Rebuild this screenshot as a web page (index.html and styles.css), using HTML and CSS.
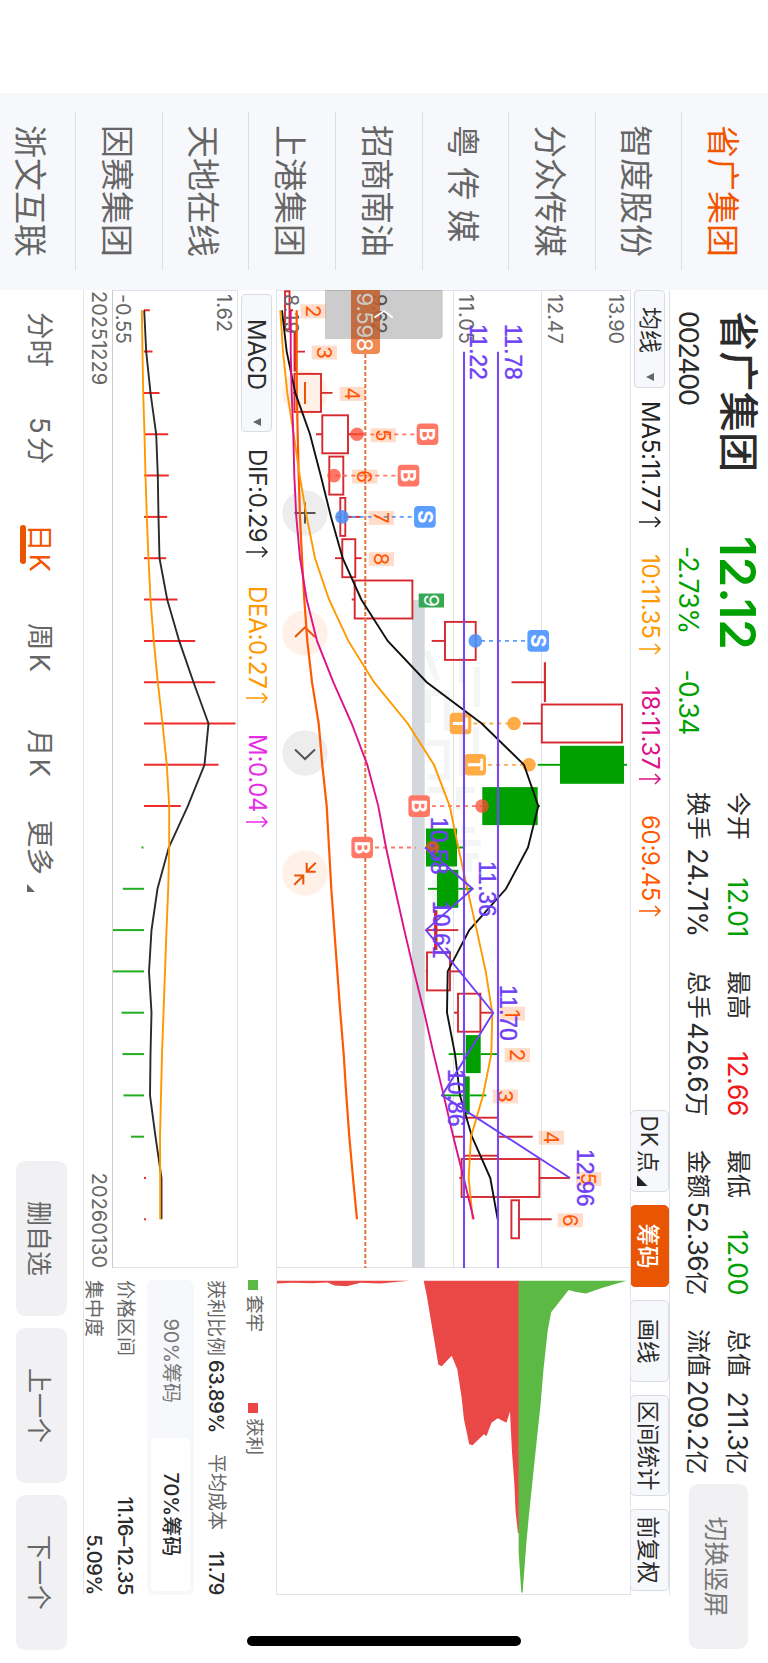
FILE: index.html
```html
<!DOCTYPE html>
<html lang="zh-CN">
<head>
  <meta charset="UTF-8" />
  <meta name="viewport" content="width=device-width, initial-scale=1.0"/>
  <title>省广集团 002400</title>
  <link rel="stylesheet" href="styles.css">
</head>
<body>

  <div class="screen">
    <aside class="watchlist">
      <div class="stock active">省广集团</div>
      <div class="stock">智度股份</div>
      <div class="stock">分众传媒</div>
      <div class="stock">粤 传 媒</div>
      <div class="stock">招商南油</div>
      <div class="stock">上港集团</div>
      <div class="stock">天地在线</div>
      <div class="stock">因赛集团</div>
      <div class="stock">浙文互联</div>
    </aside>

    <main class="main">
      <header class="quote">
        <div class="title">
          <h1>省广集团</h1>
          <div class="code">002400</div>
        </div>
        <div class="price">
          <div class="last">12.12</div>
          <div class="change"><span>-2.73%</span><span>-0.34</span></div>
        </div>
        <div class="stats">
          <div class="stat"><span>今开</span><span class="green">12.01</span></div>
          <div class="stat"><span>最高</span><span class="red">12.66</span></div>
          <div class="stat"><span>最低</span><span class="green">12.00</span></div>
          <div class="stat"><span>总值</span><span>211.3<em>亿</em></span></div>
          <div class="stat"><span>换手</span><span>24.71%</span></div>
          <div class="stat"><span>总手</span><span>426.6<em>万</em></span></div>
          <div class="stat"><span>金额</span><span>52.36<em>亿</em></span></div>
          <div class="stat"><span>流值</span><span>209.2<em>亿</em></span></div>
        </div>
        <button class="gray-btn rotate-btn">切换竖屏</button>
      </header>

      <div class="toolbar">
        <button class="select ma-select">均线<i class="caret"></i></button>
        <span class="ind ma5">MA5:11.77<svg class="up" viewBox="0 0 14 24"><path d="M7 23V2M2 7l5-5 5 5"/></svg></span>
        <span class="ind ma10">10:11.35<svg class="up" viewBox="0 0 14 24"><path d="M7 23V2M2 7l5-5 5 5"/></svg></span>
        <span class="ind ma18">18:11.37<svg class="up" viewBox="0 0 14 24"><path d="M7 23V2M2 7l5-5 5 5"/></svg></span>
        <span class="ind ma60">60:9.45<svg class="up" viewBox="0 0 14 24"><path d="M7 23V2M2 7l5-5 5 5"/></svg></span>
        <div class="tools">
          <button class="tool dk">DK<span>点</span><i class="corner"></i></button>
          <button class="tool active">筹码</button>
          <button class="tool">画线</button>
          <button class="tool wide">区间统计</button>
          <button class="tool">前复权</button>
        </div>
      </div>

      <div class="charts">
        <div class="left">
          <svg id="kline" class="kline" viewBox="0 0 978 355"></svg>

          <div class="macd-bar">
            <button class="select macd-select">MACD<i class="caret"></i></button>
            <span class="ind dif">DIF:0.29<svg class="up" viewBox="0 0 14 24"><path d="M7 23V2M2 7l5-5 5 5"/></svg></span>
            <span class="ind dea">DEA:0.27<svg class="up" viewBox="0 0 14 24"><path d="M7 23V2M2 7l5-5 5 5"/></svg></span>
            <span class="ind macd">M:0.04<svg class="up" viewBox="0 0 14 24"><path d="M7 23V2M2 7l5-5 5 5"/></svg></span>
          </div>

          <svg id="macd" class="macd-chart" viewBox="0 0 978 126"></svg>
          <div class="dates"><span>20251229</span><span>20260130</span></div>
        </div>

        <div class="right">
          <svg class="chips" viewBox="0 0 327 355">
            <path fill="#ea4747" d="M12.3 355H15.2L14.5 340 15 320 14.1 304.3 17.3 297 18 285 14.5 271 15.2 251 12.3 222z"/>
            <path fill="#ea4747" d="M12.3 207.5 27.8 204.3 47.5 201 97 192.7 98.5 189.3 87.7 179.3 101.4 173.7 130 169.3 151.7 167 176.8 161.7 177.9 158.3 166.8 147 168.6 144.3 155.3 139.3 150.6 133 155.3 124.3 143.8 120.7 184 118.7 216.3 116.3 245 115 266 112.7V111.7H12.3z"/>
            <path fill="#5bb944" d="M12.3 112H285.3L326 109.3V108L277.4 104.3 248.7 101.7 216.3 98.3 191.2 95.7 162.5 92.7 137.3 90 101.4 87 61.9 82.7 44 79.3 21.7 61.7 23.8 54.3 25.2 44.3 19.5 27.7 12.3 3.3z"/>
          </svg>
          <div class="legend">
            <span><i class="sq trapped"></i>套牢</span>
            <span><i class="sq profit"></i>获利</span>
          </div>
          <div class="row cost">
            <span>获利比例<b>63.89%</b></span>
            <span>平均成本</span>
            <b>11.79</b>
          </div>
          <div class="segment">
            <span>90%筹码</span>
            <span class="on">70%筹码</span>
          </div>
          <div class="row range"><span>价格区间</span><b>11.16–12.35</b></div>
          <div class="row conc"><span>集中度</span><b>5.09%</b></div>
        </div>
      </div>

      <footer class="bottom">
        <nav class="periods">
          <span class="fen">分时</span>
          <span class="five">5分</span>
          <span class="day active">日K</span>
          <span class="week">周K</span>
          <span class="month">月K</span>
          <span class="more">更多<i class="corner"></i></span>
        </nav>
        <button class="gray-btn">删自选</button>
        <button class="gray-btn">上一个</button>
        <button class="gray-btn">下一个</button>
      </footer>
    </main>

    <div class="home-bar"></div>
  </div>

  <script>
    const STEP = 41.32;
    const cx = i => +(20.3 + STEP * i).toFixed(1);
    const NS = 'http://www.w3.org/2000/svg';

    function draw(svg, tag, attrs, text) {
      const el = document.createElementNS(NS, tag);
      for (const k in attrs) el.setAttribute(k, attrs[k]);
      if (text) el.textContent = text;
      svg.appendChild(el);
      return el;
    }

    function line(svg, x1, y1, x2, y2, cls) {
      draw(svg, 'line', { x1, y1, x2, y2, class: cls });
    }

    function curve(svg, values, cls) {
      draw(svg, 'polyline', { points: values.map((v, i) => cx(i) + ',' + v).join(' '), class: cls });
    }

    // ---------- K线 ----------
    const k = document.getElementById('kline');

    // 水印
    draw(k, 'path', {
      d: 'M361 204l29-10M367 169h26M377 154h40M433 203h-30v-19h38M453 203v-19h34v19M440 169h46M437 155h28M500 203v-20M500 156v16h20M540 156v14M553 150v24M566 152v10h16M590 196h24v-16',
      class: 'watermark'
    });

    line(k, 0, 0.5, 978, 0.5, 'grid');
    line(k, 0, 89.5, 978, 89.5, 'grid');
    line(k, 0, 177.5, 978, 177.5, 'grid');
    line(k, 0, 354.5, 978, 354.5, 'grid');
    line(k, 0.5, 0, 0.5, 355, 'grid');
    line(k, 977.5, 0, 977.5, 355, 'grid');

    // high, body top, body bottom, low, colour
    const candles = [
      [338, 341.5, 346, 347, 'r'], [326, 335, 336.5, 337, 'r'], [298.5, 310, 336.5, 338, 'r'], [266, 283, 308.7, 315, 'r'],
      [285.5, 287.7, 301.7, 302, 'r'], [269.3, 285.7, 290.7, 294.3, 'r'], [269.3, 275.7, 288.7, 296, 'r'], [218.3, 218.6, 276.3, 279.3, 'r'],
      [155, 155.3, 186, 199.3, 'r'], [86, 86, 86.2, 119.5, 'r'], [8.7, 9, 89.2, 108, 'r'], [4, 7, 71, 93.3, 'g'],
      [91, 93.3, 148.7, 149, 'g'], [167.7, 174, 205, 206, 'g'], [158.3, 172.7, 194, 203, 'g'], [172.7, 194.5, 196, 205.3, 'r'],
      [169.3, 181, 204, 205.3, 'r'], [138.3, 150.6, 173, 177, 'r'], [133.3, 150.3, 165.3, 182.3, 'g'], [144.7, 161.3, 167, 189.3, 'g'],
      [98.3, 133, 167, 177.7, 'r'], [61, 91.6, 169.4, 171.7, 'r'], [79.3, 112, 119.6, 119.6, 'r']
    ];

    // 缺口
    draw(k, 'rect', { x: 310, y: 206.3, width: 668, height: 12.7, fill: '#d4d8dd' });

    candles.forEach(([hi, top, bot, lo, c], i) => {
      const x = cx(i), cls = c === 'g' ? 'fall' : 'rise';
      line(k, x, hi, x, top, cls);
      line(k, x, bot, x, lo, cls);
      draw(k, 'rect', { x: x - 19, y: top, width: 38, height: bot - top, class: 'body ' + cls });
    });

    line(k, 64, 265.7, 978, 265.7, 'cost-line');

    // 圆形操作按钮
    [[103, 1], [223, 0], [343, 1], [463, 0], [583, 1]].forEach(([x, hot]) => {
      draw(k, 'circle', { cx: x, cy: 326, r: 22.7, class: hot ? 'op hot' : 'op' });
    });
    draw(k, 'path', { d: 'M92 326h22', class: 'op-icon hot' });
    draw(k, 'path', { d: 'M212.5 326h21M223 315.5v21', class: 'op-icon' });
    draw(k, 'path', { d: 'M347 316l-9.7 10 9.7 10', class: 'op-icon hot' });
    draw(k, 'path', { d: 'M459.5 316l9.5 10-9.5 10', class: 'op-icon' });
    draw(k, 'path', { d: 'M572.7 324.3h9v-9M581.7 324.3l-9-9M594.5 327.7h-9v9M585.7 327.7l9 9', class: 'op-icon hot' });

    // 买卖点: 序号, 类型, 标签顶部, 圆点
    const signals = [
      [3, 'B', 192.7, 274], [4, 'B', 211.7, 297], [5, 'S', 195.3, 289], [8, 'S', 82, 155.7],
      [10, 'T', 159.7, 117], [11, 'T', 145, 102], [12, 'B', 201, 149], [13, 'B', 258, 198.3]
    ];
    signals.forEach(([i, s, y, dot]) => {
      const x = cx(i);
      const start = dot > y ? y + 24 : y - 2;
      const end = i === 13 ? 215 : dot;
      line(k, x, start, x, end, 'lead ' + s);
      draw(k, 'circle', { cx: x, cy: dot, r: 6.8, class: 'dot ' + s });
      draw(k, 'rect', { x: x - 10.8, y, width: 21.6, height: 21.6, rx: 4, class: 'sig ' + s });
      draw(k, 'text', { x, y: y + 18, class: 'sig-text' }, s);
    });

    // 神奇九转
    const nine = [
      [0, '2', 305.3], [1, '3', 294], [2, '4', 266], [3, '5', 235], [4, '6', 253.7], [5, '7', 237], [6, '8', 237], [7, '9', 187],
      [17, '1', 106], [18, '2', 101], [19, '3', 113], [20, '4', 67], [21, '5', 29.7], [22, '6', 48]
    ];
    nine.forEach(([i, n, y]) => {
      const x = cx(i) + 1;
      draw(k, 'rect', { x: x - 7, y, width: 14, height: 25.3, class: n === '9' ? 'nine full' : 'nine' });
      draw(k, 'text', { x, y: y + 20, class: n === '9' ? 'nine-text full' : 'nine-text' }, n);
    });

    [['13.90', 22], ['12.47', 83.3], ['11.05', 172], ['9.62', 259.5], ['8.19', 347.5]].forEach(([t, y]) => {
      draw(k, 'text', { x: 4, y, class: 'axis', textLength: t.length > 4 ? 50 : 40 }, t);
    });

    curve(k, [334.3, 334.3, 334.2, 333.3, 332.3, 331, 329, 326.7, 323.7, 319, 312.3, 308.7, 304.3, 302, 299.7, 296.7, 293.7, 290.7, 287.3, 284.7, 281.7, 278, 274], 'curve ma60');
    curve(k, [349, 344.3, 335.7, 321, 310.3, 300, 288.3, 269.7, 243.3, 204.3, 149.3, 107, 92.7, 103, 125, 161.7, 183.3, 184, 176, 171, 159, 140.7, 133.3], 'curve ma5');
    curve(k, [350.7, 348, 343.7, 337.3, 331.3, 324.3, 316, 302, 282.7, 257, 223.3, 197, 181.3, 172.7, 163.7, 154.3, 145.3, 138.7, 139.7, 148, 160, 162.3, 158.3], 'curve ma10');
    curve(k, [340.3, 340.3, 339.3, 337.7, 336.7, 334.7, 331, 324.3, 314, 297.7, 279.3, 263.7, 252.7, 245, 236, 226.7, 217, 206.7, 197.3, 187.3, 177.7, 167.3, 157.3], 'curve ma18');

    // 中枢与笔
    line(k, 61.7, 133, 978, 133, 'pen');
    line(k, 61.7, 167, 978, 167, 'pen');
    draw(k, 'polyline', {
      points: [[13, 206], [14, 158.3], [15, 205], [17, 137.7], [19, 189], [21, 61]].map(p => cx(p[0]) + ',' + p[1]).join(' '),
      class: 'zig'
    });
    [['11.78', 34, 126], ['11.22', 34, 161], ['10.58', 527, 200], ['11.36', 571, 152], ['10.61', 611, 198],
     ['11.70', 695, 131], ['10.86', 779, 183], ['12.96', 859, 54]].forEach(([t, x, y]) => {
      draw(k, 'text', { x, y, class: 'pen-text' }, t);
    });

    // 成本价标签与收起按钮
    draw(k, 'path', { d: 'M0 251H60a4 4 0 0 1 4 4V276a4 4 0 0 1-4 4H0z', fill: '#f0773a', 'fill-opacity': 0.88 });
    draw(k, 'text', { x: 2.5, y: 274, class: 'cost-text', textLength: 59 }, '9.598');
    draw(k, 'path', { d: 'M0 188.3H45a4 4 0 0 1 4 4V306H0z', fill: '#000', 'fill-opacity': 0.2 });
    draw(k, 'path', { d: 'M27.5 238.3l-6.5 8.7 6.5 9.5', fill: 'none', stroke: '#fff', 'stroke-width': 1.6 });

    // ---------- MACD ----------
    const m = document.getElementById('macd');
    draw(m, 'path', { d: 'M0 .5H977.5V126M.5 0V126', class: 'grid' });
    draw(m, 'path', { d: 'M0 125.5H978', class: 'grid dark' });

    const bars = [88.2, 85.5, 78.5, 69.8, 69.2, 70.8, 71.8, 60.5, 42.8, 22.8, 2.5, 19.5, 57.2, 96.5,
      115.2, 125, 125, 116.5, 115.5, 114.5, 107, 92, 92];
    bars.forEach((v, i) => {
      const base = i === 13 ? 94.5 : 94;
      line(m, cx(i), base, cx(i), v, v > 94 ? 'bar down' : 'bar up-bar');
    });
    curve(m, [93.8, 91.8, 87.5, 81.8, 80.2, 79.5, 78.5, 70.8, 58.8, 44.5, 29.5, 33.5, 50.2, 69.2, 80.5, 86.5, 89, 86.5, 87.5, 88, 82.5, 76.5, 76.5], 'curve dif');
    curve(m, [96.2, 95.5, 94.8, 93.5, 92.5, 91.2, 89.5, 87.5, 84.2, 80.2, 75.5, 71.2, 68.8, 68.8, 69.8, 71.5, 73, 74.5, 76, 77, 78, 77.8, 77.8], 'curve dea');
    draw(m, 'text', { x: 4, y: 21.5, class: 'axis', textLength: 38 }, '1.62');
    draw(m, 'text', { x: 4, y: 122, class: 'axis', textLength: 50 }, '-0.55');
  </script>

</body>
</html>
```

FILE: styles.css
```css
* { box-sizing: border-box; }
html, body {
  margin: 0;
  width: 768px;
  height: 1663px;
  overflow: hidden;
  background: #fff;
}
body {
  font-family: Inter, 'Noto Sans CJK SC', sans-serif;
  color: #2b2b2b;
}
button {
  font-family: inherit;
  border: none;
  padding: 0;
  color: inherit;
}
em { font-style: normal; }

/* landscape screen turned onto the portrait page */
.screen {
  display: flex;
  width: 1663px;
  height: 768px;
  padding-left: 93px;
  overflow: hidden;
  white-space: nowrap;
  transform-origin: 0 0;
  transform: rotate(90deg) translateY(-768px);
}
.home-bar {
  position: absolute;
  right: 17px;
  top: 247px;
  width: 10px;
  height: 274px;
  border-radius: 5px;
  background: #000;
}

/* watchlist */
.watchlist {
  flex: none;
  width: 197px;
  padding: 0 20px 0 19px;
  overflow: hidden;
  background: #f7f8fb;
}
.stock {
  height: 86.6px;
  padding: 20px 0 0 13px;
  border-bottom: 1px solid #dcdee2;
  font-size: 33px;
  line-height: 50px;
  color: #666;
}
.stock.active { color: #f25500; }
.stock:last-child {
  height: 75px;
  border: 0;
}

.main {
  flex: none;
  width: 1373px;
}

/* header */
.quote {
  display: flex;
  height: 98px;
  padding-left: 21px;
}
.title { width: 225px; }
h1 {
  margin: 0;
  height: 62px;
  line-height: 60px;
  font-size: 40.3px;
  font-weight: 500;
}
.code {
  font-size: 27px;
  line-height: 35px;
  letter-spacing: -1.3px;
}
.price {
  width: 256px;
  color: #00a000;
}
.last {
  height: 62px;
  line-height: 61px;
  font-size: 49px;
  font-weight: 600;
}
.change {
  display: flex;
  gap: 36px;
  padding-left: 10px;
  font-size: 26.5px;
  line-height: 35px;
  letter-spacing: -0.7px;
}
.stats {
  display: grid;
  grid-template-columns: repeat(4, 145px);
  grid-auto-rows: 40px;
  column-gap: 34px;
  width: 692px;
  padding-top: 10px;
}
.stat {
  display: flex;
  justify-content: space-between;
  font-size: 24px;
  line-height: 40px;
}
.stat span + span {
  font-size: 26.5px;
  letter-spacing: -0.4px;
}
.stat em { font-size: 24px; }
.green { color: #00a000; }
.red { color: #f01818; }
.gray-btn {
  width: 155px;
  height: 51px;
  border-radius: 9px;
  background: #f1f1f3;
  font-size: 25px;
  color: #666;
}
.rotate-btn {
  width: 165px;
  height: 59px;
  margin-top: 20px;
  color: #777;
}

/* toolbar */
.toolbar {
  display: flex;
  align-items: center;
  width: 1305px;
  height: 39px;
  border-top: 1px solid #dfe1e5;
}
.select {
  display: flex;
  align-items: center;
  height: 31px;
  border: 1px solid #d9dce2;
  border-radius: 4px;
  background: #f7f8fb;
  font-size: 23px;
  line-height: 29px;
}
.ma-select {
  width: 98px;
  padding-left: 16px;
  margin-right: 13px;
}
.caret {
  margin-left: 20px;
  border: 4.5px solid transparent;
  border-top: 8px solid #666;
  border-bottom: 0;
}
.ind {
  display: flex;
  align-items: center;
  font-size: 24px;
  line-height: 38px;
  letter-spacing: -0.3px;
}
.up {
  width: 14px;
  height: 24px;
  margin-left: 3px;
  fill: none;
  stroke: currentColor;
  stroke-width: 1.5;
}
.ma5 { width: 153px; color: #222; }
.ma10 { width: 132px; color: #ff9900; }
.ma18 { width: 129px; color: #dd1188; }
.ma60 { color: #ff5a00; }
.tools {
  display: flex;
  gap: 13px;
  margin: 0 4px 0 auto;
}
.tool {
  display: flex;
  align-items: center;
  justify-content: center;
  width: 82px;
  height: 39px;
  border: 1px solid #d9dce2;
  border-radius: 5px;
  background: #f7f8fb;
  font-size: 22.5px;
}
.tool.wide { width: 101px; }
.tool.active {
  border-color: #ea5504;
  background: #ea5504;
  color: #fff;
  font-weight: 500;
}
.corner {
  width: 11px;
  height: 11px;
  margin: 15px 0 0 3px;
  background: #222;
  clip-path: polygon(100% 0, 100% 100%, 0 100%);
}
.dk span { margin-left: 3px; }

/* charts */
.charts {
  display: flex;
  height: 548px;
  width: 1305px;
  border-bottom: 1px solid #e3e4e8;
}
.left { width: 978px; }
.right { width: 327px; }
.kline, .macd-chart, .chips { display: block; }
.kline {
  width: 978px;
  height: 355px;
}
.macd-bar {
  display: flex;
  align-items: center;
  height: 38px;
  padding-left: 4px;
}
.macd-select {
  width: 138px;
  padding-left: 24px;
  margin-right: 17px;
  font-size: 24px;
  letter-spacing: -0.4px;
}
.macd-select .caret { margin-left: 28px; }
.dif { width: 137px; }
.dea { width: 148px; color: #ff9900; }
.macd { color: #e62de6; }
.macd-chart {
  width: 978px;
  height: 126px;
}
.dates {
  display: flex;
  justify-content: space-between;
  padding-left: 1px;
  font-size: 20px;
  line-height: 27px;
  color: #666;
}

text { font-family: Inter, sans-serif; }
.watermark { stroke: #f4f5f6; stroke-width: 6; fill: none; }
.grid { stroke: #dfe2e7; stroke-width: 1; fill: none; }
.grid.dark { stroke: #ccc; }
.axis { font-size: 20px; fill: #666; }
.rise { stroke: #d5282f; stroke-width: 1.9; fill: none; }
.fall { stroke: #00a000; stroke-width: 1.9; fill: none; }
.body.fall { fill: #00a000; stroke: none; }
.curve { fill: none; stroke-width: 1.9; }
.curve.ma5 { stroke: #111; }
.curve.ma10, .curve.dea { stroke: #ff9900; }
.curve.ma18 { stroke: #dd1188; }
.curve.ma60 { stroke: #ff5a00; stroke-width: 2.2; }
.curve.dif { stroke: #2b2b2b; }
.pen { stroke: #7848f5; stroke-width: 2.1; }
.zig { stroke: #6f3ff5; stroke-width: 1.9; fill: none; }
.pen-text {
  font-family: 'Liberation Sans', sans-serif;
  font-size: 23px;
  fill: #6f3ff5;
  stroke: #6f3ff5;
  stroke-width: .4;
}
.cost-line { stroke: #e3743f; stroke-width: 2; stroke-dasharray: 4 2; }
.cost-text { font-size: 22px; fill: #fff; }
.op { fill: rgba(0, 0, 0, .07); }
.op.hot { fill: rgba(255, 85, 0, .09); }
.op-icon { fill: none; stroke: #555; stroke-width: 2; }
.op-icon.hot { stroke: #ea5504; }
.lead { stroke-width: 1.8; stroke-dasharray: 4 4; }
.lead.B { stroke: #ff7a66; }
.lead.S { stroke: #5b9eff; }
.lead.T { stroke: #ffac45; }
.sig.B { fill: #ff7866; }
.sig.S { fill: #5b9eff; }
.sig.T { fill: #ffac45; }
.dot.B { fill: #ff4a33; fill-opacity: .75; }
.dot.S { fill: #4a90f5; fill-opacity: .88; }
.dot.T { fill: #ffa030; fill-opacity: .88; }
.sig-text {
  font-size: 20px;
  font-weight: 700;
  fill: #fff;
  text-anchor: middle;
}
.nine { fill: #ff6a1a; fill-opacity: .23; }
.nine.full { fill: #34a853; fill-opacity: 1; }
.nine-text {
  font-size: 20.5px;
  fill: #ff5500;
  text-anchor: middle;
}
.nine-text.full { fill: #fff; }
.bar { stroke-width: 2; }
.bar.up-bar { stroke: #f02b2b; }
.bar.down { stroke: #22ad22; }

/* chip distribution */
.chips {
  width: 327px;
  height: 355px;
  border: 1px solid #dfe2e7;
  border-left: 0;
}
.legend {
  display: flex;
  gap: 71px;
  padding-left: 12px;
  font-size: 18.5px;
  line-height: 42px;
  color: #666;
}
.sq {
  display: inline-block;
  width: 10px;
  height: 10px;
  margin-right: 5px;
}
.trapped { background: #5bb944; }
.profit { background: #ea4747; }
.row {
  display: flex;
  justify-content: space-between;
  padding-left: 12px;
  font-size: 19px;
  color: #666;
}
.row b {
  font-size: 20px;
  font-weight: 500;
  letter-spacing: -0.4px;
  color: #2b2b2b;
}
.row span b { margin-left: 4px; }
.cost { line-height: 36px; }
.segment {
  display: flex;
  height: 47px;
  margin: 3px 0 0 12px;
  padding: 4px;
  border-radius: 7px;
  background: #f7f8fb;
  font-size: 20px;
  line-height: 39px;
  text-align: center;
  color: #777;
}
.segment span { flex: 1; }
.segment .on {
  border-radius: 5px;
  background: #fff;
  color: #2b2b2b;
  font-weight: 500;
}
.range { line-height: 32px; margin-top: 6px; }
.conc { line-height: 31px; }

/* bottom bar */
.bottom {
  display: flex;
  gap: 12px;
  padding: 16px 13px 0 22px;
}
.periods {
  display: flex;
  flex: 1;
  height: 51px;
  font-size: 27.5px;
  line-height: 54px;
  color: #666;
}
.periods .active { color: #f25500; }
.fen { width: 105px; }
.five {
  width: 107px;
  letter-spacing: 3px;
}
.day { width: 99px; letter-spacing: 2px; }
.day::after {
  content: '';
  display: block;
  width: 39px;
  height: 6px;
  margin: -13px 0 0 1px;
  border-radius: 3px;
  background: #ea5504;
}
.week { width: 106px; letter-spacing: 3px; }
.month { width: 91px; letter-spacing: 2px; }
.more { display: flex; }
.more .corner {
  width: 8px;
  height: 8px;
  margin: 32px 0 0 9px;
  background: #666;
}
```
